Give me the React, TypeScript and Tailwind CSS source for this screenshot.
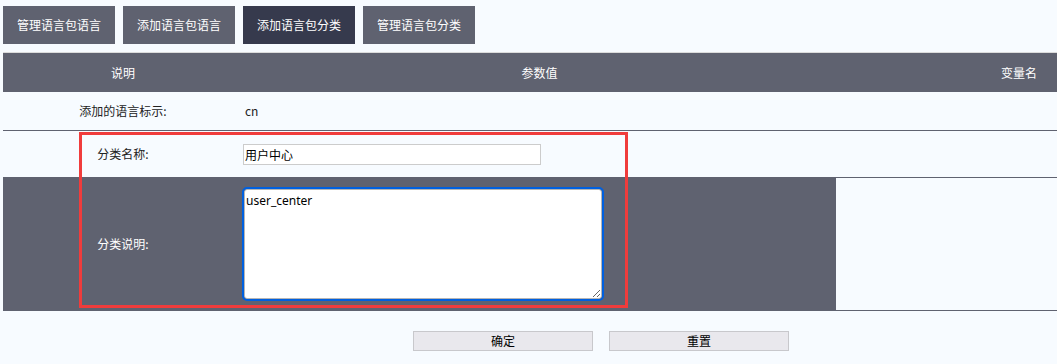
import { useState } from 'react';

const tabs = ['管理语言包语言', '添加语言包语言', '添加语言包分类', '管理语言包分类'];

export default function App() {
    const [name, setName] = useState('用户中心');
    const [desc, setDesc] = useState('user_center');
    const active = 2;

    return (
        <div className="relative h-[364px] w-[1057px] overflow-hidden bg-[#f7fbff] font-['Noto_Sans_CJK_SC',sans-serif] text-[12px] text-[#222]">
            <div className="flex gap-2 pl-[3px] pt-[6px]">
                {tabs.map((t, i) => (
                    <div
                        key={t}
                        className={`flex h-[38px] w-[112px] items-center justify-center text-[12px] text-white ${i === active ? 'bg-[#363a4d]' : 'bg-[#5f6270]'}`}
                    >
                        {t}
                    </div>
                ))}
            </div>

            <div className="ml-[3px] mt-2 w-[1196px] border-t border-[#dcdcdc]">
                <div className="grid h-[39px] grid-cols-[240px_593px_363px] items-center bg-[#5f6270] text-white">
                    <div className="text-center">说明</div>
                    <div className="text-center">参数值</div>
                    <div className="pl-[3px] text-center">变量名</div>
                </div>

                <div className="grid h-[39px] grid-cols-[240px_593px_363px] items-center border-b border-[#5f6270]">
                    <div className="text-center">添加的语言标示:</div>
                    <div className="pl-[2px]">cn</div>
                    <div />
                </div>

                <div className="grid h-[47px] grid-cols-[240px_593px_363px] items-center border-b border-[#5f6270]">
                    <div className="text-center">分类名称:</div>
                    <div>
                        <input
                            value={name}
                            onChange={(e) => setName(e.target.value)}
                            className="h-[21px] w-[298px] border border-[#cccccc] bg-white px-[1px] text-[12px] text-black outline-none"
                        />
                    </div>
                    <div />
                </div>

                <div className="grid h-[133px] grid-cols-[240px_593px_363px] border-b border-[#5f6270]">
                    <div className="flex items-center justify-center bg-[#5f6270] text-white">分类说明:</div>
                    <div className="flex items-center bg-[#5f6270] pl-0">
                        <textarea
                            value={desc}
                            onChange={(e) => setDesc(e.target.value)}
                            className="ml-[1px] h-[110px] w-[358px] rounded-[3px] border border-[#b5b5b5] bg-white px-[1px] py-[2px] font-['Noto_Sans',sans-serif] text-[12px] text-black outline-2 outline-[#0060df]"
                        />
                    </div>
                    <div />
                </div>
            </div>

            <div className="ml-[3px] mt-5 flex w-[1196px] justify-center gap-4">
                <button className="h-[20px] w-[180px] border border-[#c8c8cc] bg-[#e9e8ed] text-[12px] text-black">确定</button>
                <button className="h-[20px] w-[180px] border border-[#c8c8cc] bg-[#e9e8ed] text-[12px] text-black">重置</button>
            </div>

            <div className="pointer-events-none absolute left-[79px] top-[132px] h-[176px] w-[549px] border-[3px] border-[#f03c3c]" />
        </div>
    );
}
